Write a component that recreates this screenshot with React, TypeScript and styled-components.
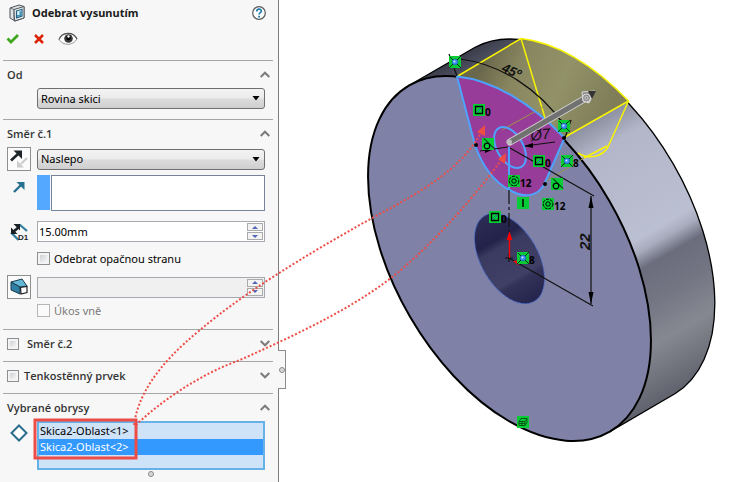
import React, { useState } from "react";
import styled, { createGlobalStyle, css } from "styled-components";

const GlobalStyle = createGlobalStyle`
  *, *::before, *::after { box-sizing: border-box; }
  body {
    margin: 0;
    background: #fff;
    color: #000;
    font: 11px/16px "Noto Sans", "Open Sans", sans-serif;
  }
  button, input, select, textarea { font: inherit; color: inherit; margin: 0; }
`;

const Page = styled.div`
  position: relative;
  display: flex;
  align-items: stretch;
  min-height: 100vh;
  overflow: hidden;
`;

const Panel = styled.aside`
  position: relative;
  flex: none;
  display: flex;
  flex-direction: column;
  width: 279px;
  padding: 0 5px 0 3px;
  background: #f7f7f7;
  border-right: 1px solid #7d7d7d;
`;

const PanelTab = styled.button`
  position: absolute;
  top: 350px;
  left: 100%;
  width: 8px;
  height: 39px;
  padding: 0;
  display: flex;
  align-items: center;
  justify-content: center;
  background: #f7f7f7;
  border: 1px solid #8c8c8c;
  border-left: 0;
`;

const Knob = styled.span`
  width: 6px;
  height: 6px;
  border: 1px solid #8a8a8a;
  border-radius: 50%;
  background: #d8d8d8;
`;

const TitleBar = styled.header`
  display: flex;
  align-items: center;
  gap: 6px;
  height: 25px;
  padding: 0 7px 0 5px;
`;

const Title = styled.h1`
  flex: 1;
  margin: 0;
  font-size: 11px;
  font-weight: 700;
  color: #1c1c1c;
`;

const IconButton = styled.button<{ $framed?: boolean }>`
  display: inline-flex;
  align-items: center;
  justify-content: center;
  padding: 0;
  border: 0;
  background: none;
  ${(p) =>
    p.$framed &&
    css`
      width: 24px;
      height: 24px;
      border: 1px solid #8f8f8f;
      background: #fbfbfb;
    `}
`;

const ActionBar = styled.div`
  display: flex;
  align-items: center;
  gap: 13px;
  height: 28px;
  margin-bottom: 7px;
  padding-left: 3px;
`;

const Section = styled.section<{ $bottom?: number }>`
  padding: 0 8px ${(p) => p.$bottom ?? 0}px 4px;
  border-top: 1px solid #a5a5a5;
`;

const SectionHeader = styled.div<{ $tall?: boolean }>`
  display: flex;
  align-items: center;
  height: ${(p) => (p.$tall ? 31 : 27)}px;
  margin-right: -5px;
  padding-bottom: ${(p) => (p.$tall ? 4 : 0)}px;
`;

const SectionTitle = styled.h2`
  flex: 1;
  margin: 0;
  font-family: "Open Sans", "Noto Sans", sans-serif;
  font-size: 11px;
  font-weight: 600;
  color: #333;
`;

const TitleLabel = styled.label<{ $gap: number }>`
  display: flex;
  align-items: center;
  gap: ${(p) => p.$gap}px;
`;

const Row = styled.div<{ $top?: number; $align?: string }>`
  display: grid;
  grid-template-columns: 24px minmax(0, 1fr);
  column-gap: 6px;
  align-items: ${(p) => p.$align ?? "center"};
  margin-top: ${(p) => p.$top ?? 0}px;
`;

const IconCell = styled.span<{ $drop?: number }>`
  display: flex;
  justify-content: center;
  padding-top: ${(p) => p.$drop ?? 0}px;
`;

const Field = styled.div`
  grid-column: 2;
  position: relative;
  display: flex;
`;

const Select = styled.select`
  width: 100%;
  height: 21px;
  padding: 0 20px 0 3px;
  appearance: none;
  border: 1px solid #6f6f6f;
  border-radius: 3px;
  background: linear-gradient(#f3f3f3 0%, #ebebeb 48%, #dcdcdc 52%, #cfcfcf 100%);
`;

const Caret = styled.svg`
  position: absolute;
  right: 5px;
  top: 8px;
  pointer-events: none;
`;

const Stripe = styled.span`
  flex: none;
  width: 13px;
  height: 35px;
  margin-right: 1px;
  background: #55a8ff;
`;

const PickBox = styled.textarea`
  display: block;
  flex: 1;
  min-width: 0;
  height: 36px;
  resize: none;
  border: 1px solid #77839a;
  background: #fff;
`;

const NumberFrame = styled.div<{ $off?: boolean }>`
  grid-column: 2;
  display: flex;
  align-items: center;
  height: 21px;
  padding-right: 1px;
  border: 1px solid #a6a9b0;
  background: ${(p) => (p.$off ? "#f0f0f0" : "#fff")};
`;

const NumberInput = styled.input`
  flex: 1;
  min-width: 0;
  height: 19px;
  padding: 0 0 0 1px;
  border: 0;
  background: transparent;
`;

const Spinner = styled.div`
  display: flex;
  flex-direction: column;
  gap: 1px;
`;

const SpinButton = styled.button`
  display: flex;
  align-items: center;
  justify-content: center;
  width: 16px;
  height: 8px;
  padding: 0;
  border: 1px solid #aaa;
  background: #f3f3f3;
`;

const CheckLabel = styled.label<{ $off?: boolean }>`
  grid-column: 2;
  display: flex;
  align-items: center;
  gap: 4px;
  height: 13px;
  color: ${(p) => (p.$off ? "#7a7a7a" : "#000")};
`;

const Check = styled.input<{ $small?: boolean }>`
  flex: none;
  appearance: none;
  width: ${(p) => (p.$small ? 12 : 13)}px;
  height: ${(p) => (p.$small ? 12 : 13)}px;
  border: 1px solid #8e8f8f;
  background: linear-gradient(135deg, #cfd2d6, #f6f6f6) content-box, #f4f4f4;
  padding: 2px;
  &:disabled {
    border-color: #b6b6b6;
    background: #fafafa;
  }
  &:checked { background: #3796ff content-box; }
`;

const ListBox = styled.select`
  grid-column: 2;
  width: 100%;
  height: 49px;
  padding: 0;
  overflow: hidden;
  border: 2px solid #66b2e6;
  border-radius: 0;
  outline: 0;
  background: #cfe3f8;
  option {
    height: 16px;
    min-height: 16px;
    padding: 0 1px;
    line-height: 16px;
    color: #000;
  }
  option:checked {
    color: #fff;
    background: #3399ff linear-gradient(#3399ff, #3399ff);
  }
`;

const Grip = styled.div`
  display: flex;
  justify-content: center;
  padding: 1px 0 5px 25px;
`;

const Viewport = styled.main`
  flex: 1;
  min-width: 0;
  overflow: hidden;
  background: #fff;
  svg { display: block; }
`;

const Callouts = styled.svg`
  position: absolute;
  left: 0;
  top: 0;
  pointer-events: none;
`;

const Chevron = ({ up }: { up?: boolean }) => (
  <svg width="10" height="7" viewBox="0 0 10 7" fill="none" stroke="#7b7b7b" strokeWidth="2">
    <path d={up ? "M.7 6 5 1.7 9.3 6" : "M.7 1 5 5.3 9.3 1"} />
  </svg>
);

const CutIcon = () => (
  <svg width="18" height="18" viewBox="0 0 18 18">
    <path d="M2 4 11 1l5 1.500v11.500L7 17l-5-3Z" fill="#dfe3e6" stroke="#4c5258" />
    <path d="M2 4l4 1.500V16" fill="none" stroke="#6c7278" />
    <path d="M6 5.500 16 2.500V14L6.500 17Z" fill="#eef1f3" stroke="#4c5258" />
    <path d="M8.500 7l5.500-1.700v6.700l-5.500 1.800Z" fill="#d5eef8" stroke="#27607e" strokeWidth="1.200" />
    <path d="M9 11h2.500V7.500L13.500 7v4.700L9 13Z" fill="#3b94bb" />
  </svg>
);

const HelpIcon = () => (
  <svg width="14" height="14" viewBox="0 0 14 14" fill="none">
    <circle cx="7" cy="7" r="6.300" fill="#fff" stroke="#55595c" strokeWidth="1.200" />
    <path d="M4.800 5.400c0-3 4.600-2.900 4.500-.2 0 1.500-2.200 1.500-2.200 3.300" stroke="#1c78a8" strokeWidth="1.600" />
    <path d="M6.200 9.700h1.800v1.700H6.200z" fill="#1c78a8" />
  </svg>
);

const OkIcon = () => (
  <svg width="14" height="12" viewBox="0 0 14 12" fill="none">
    <path d="M1.500 5.500 5 9l7-7" stroke="#3fa61f" strokeWidth="2.800" />
  </svg>
);

const CancelIcon = () => (
  <svg width="12" height="12" viewBox="0 0 12 12" fill="none">
    <path d="m2 2 8 8M10 2l-8 8" stroke="#dc2207" strokeWidth="2.500" />
  </svg>
);

const EyeIcon = () => (
  <svg width="20" height="14" viewBox="0 0 20 14">
    <path d="M1 7.500C4 0 15-1 19 7c-4 7-14 7-18 .5Z" fill="#fff" stroke="#999" />
    <path d="M1 7.500C4 0 15-1 19 7" fill="none" stroke="#555" strokeWidth="1.200" />
    <circle cx="10.500" cy="6.500" r="4.300" fill="#3a3a3a" />
    <circle cx="10.500" cy="6" r="2.200" fill="#000" />
    <circle cx="10.500" cy="4.500" r="1.200" fill="#fff" />
  </svg>
);

const ReverseIcon = () => (
  <svg width="20" height="20" viewBox="0 0 20 20" fill="none">
    <path d="m18 9-6 6" stroke="#ccc" strokeWidth="2.200" />
    <path d="M8 18.500v-7l7 7Z" fill="#ccc" />
    <path d="M2 11.500 9 5" stroke="#1e2528" strokeWidth="2.600" />
    <path d="M4.500 1.500H13V10Z" fill="#1e2528" />
  </svg>
);

const VectorIcon = () => (
  <svg width="14" height="14" viewBox="0 0 14 14" fill="none">
    <path d="M2 12 9 5" stroke="#28708f" strokeWidth="2.400" />
    <path d="M4.500 2h8v8Z" fill="#28708f" />
  </svg>
);

const DepthIcon = () => (
  <svg width="20" height="20" viewBox="0 0 20 20" fill="none">
    <path d="M10.500 2.500 18 9M2 10.500 9.500 18" stroke="#2f7b9c" strokeWidth="2.200" />
    <path d="m4 10 6-5" stroke="#182026" strokeWidth="2.600" />
    <path d="M4.500 2H11v6.500ZM2 5.500V12h6.500Z" fill="#182026" />
    <text x="9" y="18" fontFamily="Liberation Sans, sans-serif" fontSize="8" fontWeight="700" fill="#222">D1</text>
  </svg>
);

const DraftIcon = () => (
  <svg width="20" height="20" viewBox="0 0 20 20">
    <path d="M2 5 13 2l5 7-7 1Z" fill="#62b6d6" stroke="#1d3b4c" strokeWidth="1" />
    <path d="m2 5 9 5v7l-9-4Z" fill="#2f7fa2" stroke="#1d3b4c" strokeWidth="1" />
    <path d="M11.500 10.500 18 9.500v6L12 17Z" fill="#fff" stroke="#222" strokeWidth="1.200" />
  </svg>
);

const ContourIcon = () => (
  <svg width="18" height="18" viewBox="0 0 18 18">
    <path d="m9 1.500 7.500 7.500L9 16.500 1.500 9Z" fill="#fff" stroke="#2b6d8c" strokeWidth="2" />
  </svg>
);

const DropDown = ({ label, options }: { label: string; options: string[] }) => (
  <Field>
    <Select aria-label={label}>
      {options.map((o) => (
        <option key={o}>{o}</option>
      ))}
    </Select>
    <Caret width="8" height="5" viewBox="0 0 8 5">
      <path d="M.5 0h7L4 4.500Z" />
    </Caret>
  </Field>
);

const NumberField = ({ label, value, off }: { label: string; value: string; off?: boolean }) => (
  <NumberFrame $off={off}>
    <NumberInput aria-label={label} defaultValue={value} disabled={off} />
    <Spinner>
      <SpinButton aria-label="Zvýšit" disabled={off}>
        <svg width="6" height="3" viewBox="0 0 6 3"><path d="M0 3 3 0l3 3Z" fill="#5464b8" /></svg>
      </SpinButton>
      <SpinButton aria-label="Snížit" disabled={off}>
        <svg width="6" height="3" viewBox="0 0 6 3"><path d="M0 0l3 3 3-3Z" fill="#5464b8" /></svg>
      </SpinButton>
    </Spinner>
  </NumberFrame>
);

type Kind = "point" | "square" | "tangent" | "ring" | "vertical" | "box";

const glyphs: Record<Kind, React.ReactNode> = {
  point: (
    <>
      <path d="M-6 6 6-6M2 2l4 4M-5-5l3 3" stroke="#06320f" strokeWidth="1" />
      <circle r="2.800" fill="#3e8cf4" stroke="#1b4fc0" strokeWidth=".6" />
      <circle cx="-.6" cy="-.6" r="1" fill="#d4e8ff" />
    </>
  ),
  square: (
    <>
      <path d="M-3.500-3.500h7v7h-7Z" fill="none" stroke="#000" strokeWidth="1.300" />
      <path d="m-2.500 2.500 5-5" stroke="#1c6ea8" strokeWidth="1" />
    </>
  ),
  tangent: (
    <>
      <circle cx="-1" cy="2" r="2.800" fill="none" stroke="#000" strokeWidth="1.200" />
      <path d="M-4-5.500 6 4.500" stroke="#000" strokeWidth="1" />
    </>
  ),
  ring: (
    <>
      <circle r="4.800" fill="none" stroke="#000" strokeWidth="1" strokeDasharray="3 1" />
      <circle r="2.200" fill="none" stroke="#000" strokeWidth="1" />
    </>
  ),
  vertical: <path d="M0-4v8" stroke="#000" strokeWidth="1.500" />,
  box: <path d="M-4-.5h6v4h-6ZM-4-.5l2-3h6l-2 3M4-3.500v4l-2 3M-1-.5v4M-4 1.500h6" fill="none" stroke="#063d12" strokeWidth=".8" />,
};

const relations: { kind: Kind; x: number; y: number; label?: string }[] = [
  { kind: "point", x: 455, y: 62 },
  { kind: "square", x: 479, y: 110, label: "0" },
  { kind: "tangent", x: 488, y: 144 },
  { kind: "point", x: 564, y: 126 },
  { kind: "square", x: 539, y: 161, label: "0" },
  { kind: "point", x: 567, y: 161, label: "8" },
  { kind: "ring", x: 514, y: 181, label: "12" },
  { kind: "tangent", x: 557, y: 184 },
  { kind: "vertical", x: 523, y: 203 },
  { kind: "ring", x: 548, y: 204, label: "12" },
  { kind: "square", x: 495, y: 217, label: "0" },
  { kind: "point", x: 523, y: 258, label: "8" },
  { kind: "box", x: 523, y: 422 },
];

const Relation = ({ kind, x, y, label }: (typeof relations)[number]) => (
  <g transform={`translate(${x} ${y})`}>
    <rect x="-6" y="-6" width="12" height="12" fill="#08cc35" />
    {glyphs[kind]}
    {label && (
      <text x="6" y="6" fontFamily="Noto Sans, sans-serif" fontSize="10" fontWeight="700">
        {label}
      </text>
    )}
  </g>
);

const Model = () => (
  <svg width="471" height="482" viewBox="279 0 471 482" role="img" aria-label="Model">
    <defs>
      <linearGradient id="side" gradientUnits="userSpaceOnUse" x1="475" y1="47" x2="675" y2="393">
        <stop offset="0" stopColor="#3b3d4b" />
        <stop offset=".06" stopColor="#555867" />
        <stop offset=".28" stopColor="#7f8292" />
        <stop offset=".32" stopColor="#9396a6" />
        <stop offset=".38" stopColor="#b2b6c8" />
        <stop offset=".62" stopColor="#bbbfd2" />
        <stop offset=".65" stopColor="#a8abbc" />
        <stop offset=".69" stopColor="#6b6d7d" />
        <stop offset=".77" stopColor="#737583" />
        <stop offset=".87" stopColor="#868891" />
        <stop offset="1" stopColor="#60626d" />
      </linearGradient>
      <linearGradient id="cut" gradientUnits="userSpaceOnUse" x1="480" y1="70" x2="600" y2="125">
        <stop offset="0" stopColor="#6a684c" />
        <stop offset=".25" stopColor="#88865f" />
        <stop offset=".6" stopColor="#929268" />
        <stop offset="1" stopColor="#7f7e59" />
      </linearGradient>
      <linearGradient id="hole" x1="0" y1="0" x2="1" y2="0">
        <stop offset="0" stopColor="#2c2c56" />
        <stop offset=".27" stopColor="#22224a" />
        <stop offset=".36" stopColor="#3b3a60" />
        <stop offset=".7" stopColor="#403f66" />
        <stop offset=".76" stopColor="#323158" />
        <stop offset="1" stopColor="#25244c" />
      </linearGradient>
    </defs>

    <path
      d="M409 85.500 474.700 47.500A200 115.300 59.900 0 1 675.300 393.500L610 431.500Z"
      fill="url(#side)"
      stroke="#000"
      strokeWidth="1.300"
    />
    <ellipse
      rx="200"
      ry="115.300"
      transform="translate(509.500 258.500) rotate(59.900)"
      fill="#7f82a6"
      stroke="#000"
      strokeWidth="2"
    />

    <path d="M457 76.500 521 38.500A200 115.300 59.900 0 1 628.500 101L565 137A200 115.300 59.900 0 0 457 76.500Z" fill="url(#cut)" />
    <path
      d="M457 76.500A200 115.300 59.900 0 1 564.500 138L546 180C541 194 530 198 517 193.500 497 186 483 168 475 145Z"
      fill="#973c98"
    />
    <g fill="none" stroke="#f8f400" strokeWidth="1.500">
      <path d="M457 76.500 521 38.500A200 115.300 59.900 0 1 628.500 101L565 137" />
      <path d="M521 38.500 545 118M628.500 101 608 147C602 157 589 160 578 153M607 146 584 158" />
    </g>
    <path d="m584 158-41 25M543 107 502 130" stroke="#9c9545" strokeWidth="1" />
    <g fill="none" stroke="#4da3ff" strokeWidth="2">
      <path d="M457 76.500A200 115.300 59.900 0 1 564.500 138L546 180C541 194 530 198 517 193.500 497 186 483 168 475 145Z" />
      <ellipse rx="22.500" ry="13" transform="translate(510 147.500) rotate(60)" />
      <path d="M509 147v43" />
    </g>

    <ellipse
      rx="49.500"
      ry="28.500"
      transform="translate(509.500 258.500) rotate(60)"
      fill="url(#hole)"
      stroke="#4468c8"
      strokeWidth="1"
      strokeDasharray="2 1"
    />

    <g fill="none" stroke="#111" strokeWidth="1.200">
      <path d="M460 59C500 64 538 88 565 126M449 54l8 22M565 138l6-18" />
      <path d="M510 148 594 196M509 258 593 306M591 196v108" />
      <path d="M509 190v42" strokeDasharray="14 3 3 3" />
      <path d="M480 151l28-4M525 146l30-4" />
      <path d="M505 258h8M509 254v8" />
    </g>
    <path d="M591 196l2.500 12h-5ZM591 304l2.500-12h-5ZM524 146l9-3v5ZM494 149l-9-1v5ZM565 126l-7-4 3-3Z" />
    <circle cx="476" cy="145" r="2" />
    <circle cx="545" cy="184" r="2" />
    <circle cx="564" cy="138" r="2" />
    <path d="M509.500 258v-20" stroke="#f00" strokeWidth="1.400" />
    <path d="M509.500 231l2.800 9h-5.600ZM513 261l8-1-3 5Z" fill="#f00" />

    <g fontFamily="Liberation Sans, sans-serif" fill="#111" fontStyle="italic">
      <text transform="translate(501 71) rotate(24)" fontSize="13" fontWeight="700">45º</text>
      <text transform="translate(531 141) rotate(-7)" fontSize="15">Ø7</text>
      <text transform="translate(590 250) rotate(-90)" fontSize="15" fontWeight="700">22</text>
    </g>

    <path d="M510 142 586 98" stroke="#d0d0d0" strokeWidth="7" strokeLinecap="round" />
    <path d="M511 141.500 586 98" stroke="#717171" strokeWidth="5" strokeLinecap="round" />
    <circle cx="509.500" cy="142" r="2.500" fill="#bbb" />
    <path d="M582 92l13-1-6 12-6-2Z" fill="#888" stroke="#ddd" strokeWidth="1" />
    <path d="M588 91l8 0-4 8Z" fill="#333" />
    <circle cx="586.500" cy="98" r="4" fill="#8c8c8c" stroke="#e0e0e0" strokeWidth="1" />
    <circle cx="586.500" cy="98" r="1.600" fill="none" stroke="#ddd" strokeWidth=".8" />

    {relations.map((r) => (
      <Relation key={`${r.x}-${r.y}`} {...r} />
    ))}
  </svg>
);

export default function App() {
  const [picked, setPicked] = useState<string[]>(["2"]);
  return (
    <Page>
      <GlobalStyle />
      <Panel>
        <TitleBar>
          <CutIcon />
          <Title>Odebrat vysunutím</Title>
          <IconButton aria-label="Nápověda"><HelpIcon /></IconButton>
        </TitleBar>
        <ActionBar>
          <IconButton aria-label="OK"><OkIcon /></IconButton>
          <IconButton aria-label="Storno"><CancelIcon /></IconButton>
          <IconButton aria-label="Náhled"><EyeIcon /></IconButton>
        </ActionBar>

        <Section $bottom={10}>
          <SectionHeader>
            <SectionTitle>Od</SectionTitle>
            <IconButton aria-label="Sbalit"><Chevron up /></IconButton>
          </SectionHeader>
          <Row><DropDown label="Od" options={["Rovina skici"]} /></Row>
        </Section>

        <Section $bottom={12}>
          <SectionHeader>
            <SectionTitle>Směr č.1</SectionTitle>
            <IconButton aria-label="Sbalit"><Chevron up /></IconButton>
          </SectionHeader>
          <Row>
            <IconButton $framed aria-label="Opačný směr"><ReverseIcon /></IconButton>
            <DropDown label="Podmínka konce" options={["Naslepo"]} />
          </Row>
          <Row $top={4} $align="start">
            <IconCell $drop={5}><VectorIcon /></IconCell>
            <Field>
              <Stripe />
              <PickBox aria-label="Směr vysunutí" readOnly />
            </Field>
          </Row>
          <Row $top={10}>
            <IconCell><DepthIcon /></IconCell>
            <NumberField label="Hloubka" value="15.00mm" />
          </Row>
          <Row $top={10}>
            <CheckLabel><Check type="checkbox" />Odebrat opačnou stranu</CheckLabel>
          </Row>
          <Row $top={10}>
            <IconButton $framed aria-label="Úkos"><DraftIcon /></IconButton>
            <NumberField label="Úhel úkosu" value="" off />
          </Row>
          <Row $top={5}>
            <CheckLabel $off><Check type="checkbox" disabled />Úkos vně</CheckLabel>
          </Row>
        </Section>

        <Section>
          <SectionHeader $tall>
            <SectionTitle>
              <TitleLabel $gap={8}><Check $small type="checkbox" />Směr č.2</TitleLabel>
            </SectionTitle>
            <IconButton aria-label="Rozbalit"><Chevron /></IconButton>
          </SectionHeader>
        </Section>

        <Section>
          <SectionHeader $tall>
            <SectionTitle>
              <TitleLabel $gap={5}><Check $small type="checkbox" />Tenkostěnný prvek</TitleLabel>
            </SectionTitle>
            <IconButton aria-label="Rozbalit"><Chevron /></IconButton>
          </SectionHeader>
        </Section>

        <Section>
          <SectionHeader>
            <SectionTitle>Vybrané obrysy</SectionTitle>
            <IconButton aria-label="Sbalit"><Chevron up /></IconButton>
          </SectionHeader>
          <Row $align="start">
            <IconCell $drop={3}><ContourIcon /></IconCell>
            <ListBox
              multiple
              size={3}
              aria-label="Vybrané obrysy"
              value={picked}
              onChange={(e) => setPicked(Array.from(e.target.selectedOptions, (o) => o.value))}
            >
              <option value="1">Skica2-Oblast&lt;1&gt;</option>
              <option value="2">Skica2-Oblast&lt;2&gt;</option>
            </ListBox>
          </Row>
        </Section>
        <Grip><Knob /></Grip>
        <PanelTab aria-label="Skrýt panel"><Knob /></PanelTab>
      </Panel>

      <Viewport><Model /></Viewport>

      <Callouts width="750" height="482" viewBox="0 0 750 482" fill="none" aria-hidden="true">
        <g stroke="#ee4d47" strokeWidth="2" strokeDasharray="2 2">
          <path d="M134 425C138 396 156 366 200 330 240 296 300 258 374 217 425 190 462 168 482 131" />
          <path d="M136 425C160 402 200 374 240 360 300 333 360 305 402 269 440 236 475 196 502 159" />
        </g>
        <path d="M485 125l-8 7 8 4ZM506 153l-8 6 7 5Z" fill="#ee4d47" />
        <rect x="35" y="420" width="101" height="38" stroke="#ee4d47" strokeWidth="3" />
      </Callouts>
    </Page>
  );
}
